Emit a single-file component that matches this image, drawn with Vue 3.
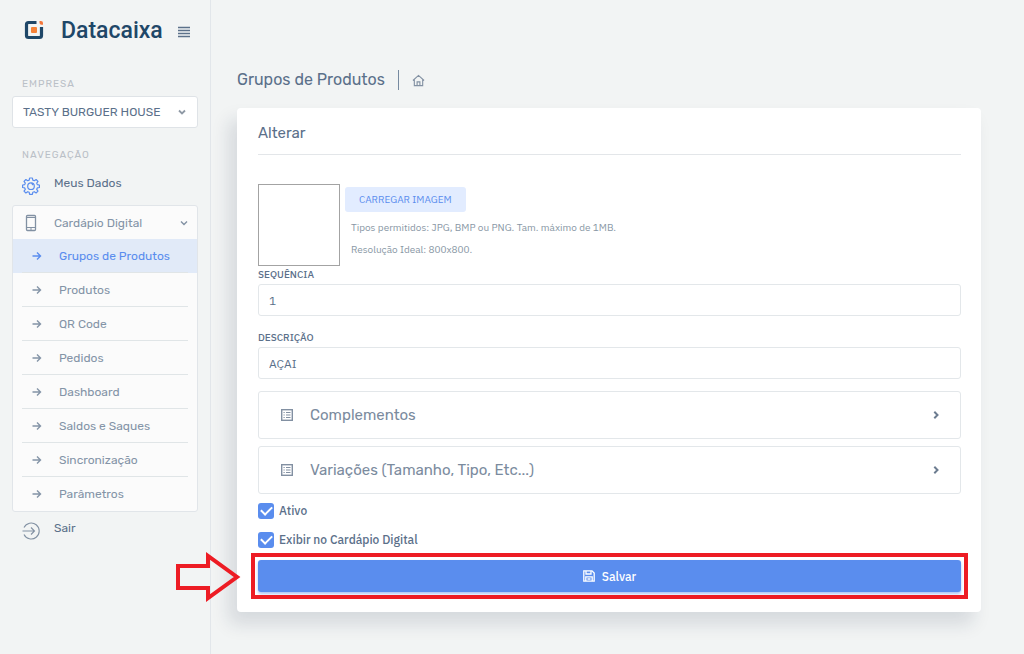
<script setup>
import { ref } from 'vue'

const company = ref('TASTY BURGUER HOUSE')
const sequence = ref('1')
const description = ref('AÇAI')
const active = ref(true)
const showInMenu = ref(true)

const submenu = [
  'Grupos de Produtos',
  'Produtos',
  'QR Code',
  'Pedidos',
  'Dashboard',
  'Saldos e Saques',
  'Sincronização',
  'Parâmetros',
]
const panels = ['Complementos', 'Variações (Tamanho, Tipo, Etc...)']
</script>

<template>
  <div class="app">
    <aside class="sidebar">
      <div class="brand">
        <svg class="logo" viewBox="0 0 20 20" aria-hidden="true">
          <path d="M12.500 2.500H4.500Q2.500 2.500 2.500 4.500V15.500Q2.500 17.500 4.500 17.500H15.500Q17.500 17.500 17.500 15.500V7" fill="none" stroke="#1f4768" stroke-width="3.200" />
          <rect x="7" y="7" width="6" height="6" rx="1" fill="#f58238" />
          <path d="M15.500 1H17Q19 1 19 3V4.800H17.500Q15.500 4.800 15.500 2.800Z" fill="#f5763a" />
        </svg>
        <span class="brand-name">Datacaixa</span>
        <button class="toggle" type="button" aria-label="Menu">
          <svg viewBox="0 0 12 12" aria-hidden="true"><path d="M0 1.500H12M0 4.500H12M0 7.500H12M0 10.500H12" stroke="#5c718a" stroke-width="1.400" /></svg>
        </button>
      </div>

      <label class="caption" for="company">EMPRESA</label>
      <div class="select-box">
        <select id="company" v-model="company">
          <option>TASTY BURGUER HOUSE</option>
        </select>
        <svg viewBox="0 0 8 8" aria-hidden="true"><path d="M1 2.500L4 5.500L7 2.500" fill="none" stroke="#8f99a5" stroke-width="1.800" /></svg>
      </div>

      <nav>
        <p class="caption nav-caption">NAVEGAÇÃO</p>
        <a class="nav-link" href="#">
          <svg class="nav-icon" viewBox="0 0 18 18" fill="none" stroke="#5a8dee" stroke-width="1.200" stroke-linejoin="round" aria-hidden="true">
            <path d="M7.600 1H10.400L10.800 3.100L12.300 3.700L14.100 2.500L16 4.400L14.700 6.100L15.300 7.600L17.400 8V10.500L15.300 10.900L14.700 12.300L16 14.100L14.100 16L12.300 14.700L10.800 15.300L10.400 17.400H7.600L7.200 15.300L5.700 14.700L3.900 16L2 14.100L3.300 12.300L2.700 10.900L.6 10.500V8L2.700 7.600L3.300 6.100L2 4.400L3.900 2.500L5.700 3.700L7.200 3.100Z" />
            <circle cx="9" cy="9.200" r="3.300" /><path d="M9.500 6.200L11 8" />
          </svg>
          <span>Meus Dados</span>
        </a>

        <div class="group">
          <a class="group-head" href="#">
            <svg class="nav-icon" viewBox="0 0 18 18" fill="none" stroke="#8291a3" aria-hidden="true">
              <rect x="4.500" y="1.500" width="9" height="15" rx="1" stroke-width="1.300" /><path d="M4.500 3.500H13.500M4.500 13.500H13.500M8 15H10" />
            </svg>
            <span>Cardápio Digital</span>
            <svg class="chev" viewBox="0 0 8 8" aria-hidden="true"><path d="M1 2.500L4 5.500L7 2.500" fill="none" stroke="#8291a3" stroke-width="1.400" /></svg>
          </a>
          <ul>
            <li v-for="(item, i) in submenu" :key="item" :class="{ current: i === 0 }">
              <a href="#">
                <svg viewBox="0 0 10 10" aria-hidden="true"><path d="M.5 5H8.500M5 1.500L8.500 5L5 8.500" fill="none" stroke="currentColor" stroke-width="1.400" /></svg>
                <span>{{ item }}</span>
              </a>
            </li>
          </ul>
        </div>

        <a class="nav-link" href="#">
          <svg class="nav-icon" viewBox="0 0 18 18" fill="none" stroke="#8291a3" stroke-width="1.100" aria-hidden="true">
            <path d="M2 5.500A8 8 0 1 1 2 12.500M.5 9H12.500M9 5.500L12.500 9L9 12.500" />
          </svg>
          <span>Sair</span>
        </a>
      </nav>
    </aside>

    <main>
      <header class="crumbs">
        <h1>Grupos de Produtos</h1>
        <a href="#" aria-label="Início">
          <svg viewBox="0 0 14 14" fill="none" stroke="#8391a3" stroke-width="1.200" aria-hidden="true">
            <path d="M1 7L7 1.500L13 7M2.500 6V12.500H11.500V6M5.500 12.500V8.500H8.500V12.500" />
          </svg>
        </a>
      </header>

      <form class="card" @submit.prevent>
        <h2>Alterar</h2>

        <div class="upload">
          <div class="preview"></div>
          <div class="upload-info">
            <button class="load" type="button">CARREGAR IMAGEM</button>
            <p>Tipos permitidos: JPG, BMP ou PNG. Tam. máximo de 1MB.</p>
            <p>Resolução Ideal: 800x800.</p>
          </div>
        </div>

        <div class="field">
          <label for="sequence">SEQUÊNCIA</label>
          <input id="sequence" v-model="sequence" type="text" />
        </div>
        <div class="field">
          <label for="description">DESCRIÇÃO</label>
          <input id="description" v-model="description" type="text" />
        </div>

        <button v-for="panel in panels" :key="panel" class="panel" type="button">
          <svg class="list" viewBox="0 0 12 12" fill="none" stroke="#8290a2" aria-hidden="true">
            <rect x=".7" y=".7" width="10.600" height="10.600" stroke-width="1.400" />
            <path d="M2.500 3.500H3.700M5 3.500H9.500M2.500 6H3.700M5 6H9.500M2.500 8.500H3.700M5 8.500H9.500" stroke-width="1.200" />
          </svg>
          <span>{{ panel }}</span>
          <svg class="next" viewBox="0 0 8 8" aria-hidden="true"><path d="M2.300 .8L5.500 4L2.300 7.200" fill="none" stroke="#6c7c90" stroke-width="2" /></svg>
        </button>

        <label class="check">
          <input v-model="active" type="checkbox" />
          <span>Ativo</span>
        </label>
        <label class="check">
          <input v-model="showInMenu" type="checkbox" />
          <span>Exibir no Cardápio Digital</span>
        </label>

        <div class="save-row">
          <button class="save" type="submit">
            <svg viewBox="0 0 12 12" fill="none" stroke="#fff" stroke-width="1.300" aria-hidden="true">
              <path d="M.8 .8H9L11.200 3V11.200H.8ZM3 1V4H8V1M2.800 11V6.800H9.200V11M4.500 9H7.500" />
            </svg>
            <span>Salvar</span>
          </button>
          <div class="highlight"></div>
          <svg class="pointer" viewBox="0 0 66 50" aria-hidden="true">
            <path d="M3 14H33V4L62 25L33 46V36H3Z" fill="none" stroke="#ed1c24" stroke-width="4" />
          </svg>
        </div>
      </form>
    </main>
  </div>
</template>

<style>
body {
  background: #f2f4f4;
}
</style>

<style scoped>
* {
  box-sizing: border-box;
}
.app {
  display: flex;
  min-height: 100vh;
  color: #5b708a;
  font-family: "IBM Plex Sans", "Noto Sans", sans-serif;
  font-size: 12px;
}
h1, h2, p, ul {
  margin: 0;
  padding: 0;
  font-weight: 400;
}
a {
  color: inherit;
  text-decoration: none;
}
button, input, select {
  font: inherit;
  color: inherit;
}
svg {
  display: block;
  flex: none;
}
.sidebar {
  flex: none;
  width: 211px;
  padding: 18px 12px 0;
  border-right: 1px solid #e2e6ea;
  font-family: Rubik, Roboto, sans-serif;
}
.brand {
  display: flex;
  align-items: center;
  height: 24px;
  padding-left: 12px;
}
.logo {
  width: 20px;
  height: 20px;
}
.brand-name {
  width: 102px;
  margin-left: 17px;
  color: #1f4768;
  font-family: Roboto, sans-serif;
  font-size: 23px;
  font-weight: 500;
}
.toggle {
  margin-left: 15px;
  padding: 4px 0 0;
  border: 0;
  background: none;
}
.toggle svg {
  width: 12px;
  height: 12px;
}
.caption {
  display: block;
  margin: 35px 0 5px 10px;
  color: #bac0c7;
  font-size: 10px;
  line-height: 14px;
  letter-spacing: 1px;
}
.nav-caption {
  margin: 20px 0 6px 10px;
}
.select-box {
  display: grid;
  align-items: center;
}
.select-box > * {
  grid-area: 1 / 1;
}
.select-box select {
  width: 100%;
  height: 32px;
  padding: 0 24px 0 10px;
  border: 1px solid #dfe3e7;
  border-radius: 3px;
  background: #fff;
  appearance: none;
}
.select-box svg {
  justify-self: end;
  width: 8px;
  height: 8px;
  margin-right: 12px;
  pointer-events: none;
}
.nav-link {
  display: flex;
  align-items: center;
  height: 30px;
  padding-left: 10px;
}
.nav-icon {
  width: 18px;
  height: 18px;
}
.nav-link .nav-icon {
  margin-top: 5px;
}
.nav-link span,
.group-head span {
  margin-left: 14px;
}
.group {
  margin: 7px 0 1px;
  border: 1px solid #e1e5e9;
  border-radius: 3px;
  background: #fbfbfb;
  color: #8494a7;
}
.group-head {
  display: flex;
  align-items: center;
  height: 33px;
  padding: 0 9px;
}
.group-head .chev {
  width: 8px;
  height: 8px;
  margin-left: auto;
}
.group ul {
  list-style: none;
}
.group li {
  padding: 0 9px;
}
.group li a {
  display: flex;
  align-items: center;
  gap: 17px;
  height: 34px;
  padding-left: 10px;
  border-bottom: 1px solid #e0e5e7;
}
.group li:last-child a {
  border-bottom: 0;
}
.group li svg {
  width: 10px;
  height: 10px;
}
.group li.current {
  background: #e1eaf8;
  color: #5a8dee;
}
main {
  flex: 1;
  min-width: 0;
  padding: 68px 43px 42px 26px;
}
.crumbs {
  display: flex;
  align-items: center;
  height: 24px;
  margin-bottom: 16px;
}
.crumbs h1 {
  padding-right: 13px;
  border-right: 1px solid #778aa0;
  font-family: Rubik, Roboto, sans-serif;
  font-size: 16px;
  line-height: 20px;
}
.crumbs svg {
  width: 13px;
  height: 13px;
  margin-left: 13px;
}
.card {
  padding: 15px 20px 20px 21px;
  border-radius: 4px;
  background: #fff;
  box-shadow: -8px 12px 18px rgba(25, 42, 70, .13);
}
.card h2 {
  margin-bottom: 29px;
  padding-bottom: 11px;
  border-bottom: 1px solid #e3e6e9;
  font-family: Rubik, Roboto, sans-serif;
  font-size: 15px;
  line-height: 20px;
}
.upload {
  display: flex;
  gap: 5px;
}
.preview {
  width: 82px;
  height: 82px;
  border: 1px solid #a3a3a3;
}
.upload-info {
  padding-top: 3px;
  color: #8997a5;
  font-size: 10px;
  line-height: 22px;
}
.upload-info p {
  padding-left: 6px;
}
.load {
  display: block;
  height: 25px;
  margin-bottom: 5px;
  padding: 0 14px;
  border: 0;
  border-radius: 3px;
  background: #e2ecff;
  color: #5a8dee;
}
.field {
  margin-bottom: 13px;
}
.field label {
  display: block;
  height: 18px;
  font-size: 10px;
  font-weight: 500;
  line-height: 17px;
}
.field input {
  display: block;
  width: 100%;
  height: 32px;
  padding: 0 10px;
  border: 1px solid #e3e7ea;
  border-radius: 3px;
  background: #fff;
}
.field + .panel {
  margin-top: -1px;
}
.panel {
  display: flex;
  align-items: center;
  width: 100%;
  height: 48px;
  margin-bottom: 7px;
  padding: 0 20px 0 22px;
  border: 1px solid #e3e7ea;
  border-radius: 3px;
  background: #fff;
  color: #7b8b9e;
  font-family: Rubik, Roboto, sans-serif;
  font-size: 15px;
}
.panel .list {
  width: 12px;
  height: 12px;
  margin-right: 17px;
}
.panel .next {
  width: 8px;
  height: 8px;
  margin-left: auto;
}
.check {
  display: flex;
  align-items: center;
  gap: 5px;
  width: fit-content;
  height: 17px;
  margin: 8px 0 12px;
  font-weight: 500;
}
.check + .check {
  margin-top: 12px;
}
.check input {
  display: grid;
  place-items: center;
  width: 16px;
  height: 16px;
  margin: 0;
  border-radius: 3px;
  background: #5a8dee;
  appearance: none;
}
.check input:checked::before {
  width: 9px;
  height: 5px;
  margin-bottom: 3px;
  border: solid #fff;
  border-width: 0 0 2px 2px;
  content: "";
  transform: rotate(-45deg);
}
.save-row {
  position: relative;
}
.save {
  display: flex;
  align-items: center;
  justify-content: center;
  gap: 7px;
  width: 100%;
  height: 32px;
  border: 0;
  border-radius: 3px;
  background: #5a8dee;
  box-shadow: 0 2px 3px rgba(90, 141, 238, .5);
  color: #fff;
  font-weight: 500;
}
.save svg {
  width: 12px;
  height: 12px;
}
.highlight {
  position: absolute;
  inset: -7px;
  border: 4px solid #ed1c24;
  pointer-events: none;
}
.pointer {
  position: absolute;
  top: -8px;
  left: -83px;
  width: 66px;
  height: 50px;
  pointer-events: none;
}
</style>
